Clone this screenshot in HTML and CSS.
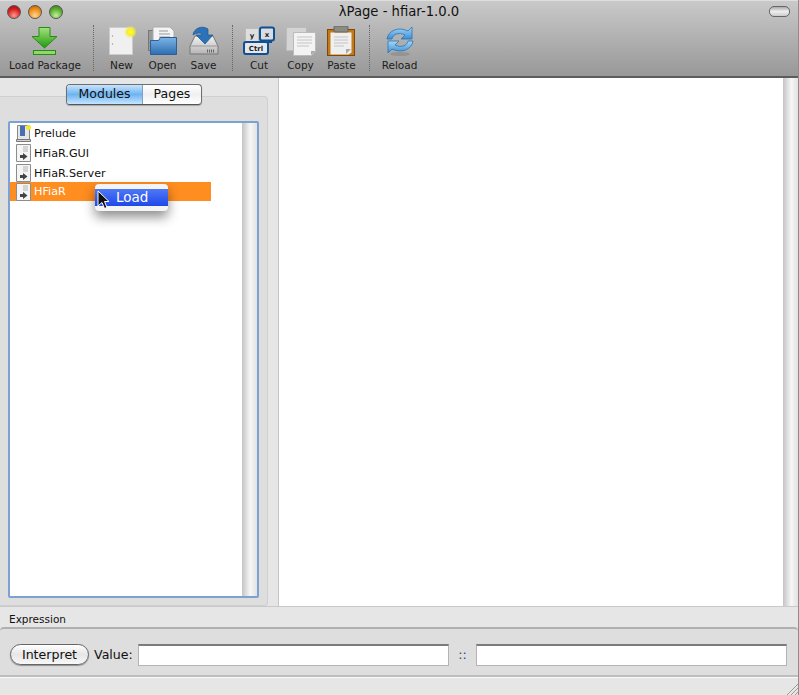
FILE: index.html
```html
<!DOCTYPE html>
<html lang="en">
<head>
  <meta charset="UTF-8" />
  <title>λPage - hfiar-1.0.0</title>
  <link rel="stylesheet" href="styles.css">
</head>
<body>
<div class="window">

  <header class="head">
    <div class="titlebar">
      <div class="lights">
        <span class="light red"></span>
        <span class="light orange"></span>
        <span class="light green"></span>
      </div>
      <div class="title">λPage - hfiar-1.0.0</div>
      <span class="pill"></span>
    </div>
    <div class="toolbar">
      <div class="tool tool-load">
        <svg width="32" height="30" viewBox="0 0 32 30">
          <defs><linearGradient id="g1" x1="0" y1="0" x2="0" y2="1"><stop offset="0" stop-color="#a5e27a"/><stop offset="1" stop-color="#1e9a0e"/></linearGradient></defs>
          <path d="M10 1.500h11v9h7L15.500 22 3 10.500h7z" fill="url(#g1)" stroke="#2b8a1c"/>
          <rect x="4.500" y="24.500" width="22" height="4" fill="#8fd968" stroke="#2b8a1c"/>
        </svg>
        <span>Load Package</span>
      </div>
      <i class="sep"></i>
      <div class="tool tool-new">
        <svg width="32" height="30" viewBox="0 0 32 30">
          <defs><radialGradient id="g2"><stop offset="0" stop-color="#ffff30"/><stop offset=".5" stop-color="#f4ee30"/><stop offset="1" stop-color="#f4ee30" stop-opacity="0"/></radialGradient></defs>
          <rect x="3.500" y="1.500" width="23" height="27" fill="#f0f0f0" stroke="#ccc"/>
          <circle cx="6.500" cy="10" r=".7" fill="#999"/><circle cx="6.500" cy="18" r=".7" fill="#999"/>
          <circle cx="24.500" cy="6" r="6.500" fill="url(#g2)"/>
        </svg>
        <span>New</span>
      </div>
      <div class="tool tool-open">
        <svg width="32" height="30" viewBox="0 0 32 30">
          <rect x="1.500" y="4.500" width="12" height="20" fill="#9a9a9a" stroke="#777"/>
          <path d="M6 1h17l4 4v10H6z" fill="#f4f4f4" stroke="#aaa"/>
          <path d="M12 5h9M12 8h11M12 11h11" stroke="#999"/>
          <defs><linearGradient id="g3" x1="0" y1="0" x2="0" y2="1"><stop offset="0" stop-color="#7db4e6"/><stop offset="1" stop-color="#2c6cb0"/></linearGradient></defs>
          <path d="M3.500 14.500h8l2-3h16v17h-26z" fill="url(#g3)" stroke="#2a5f98"/>
        </svg>
        <span>Open</span>
      </div>
      <div class="tool tool-save">
        <svg width="32" height="30" viewBox="0 0 32 30">
          <defs><linearGradient id="g4" x1="0" y1="0" x2="0" y2="1"><stop offset="0" stop-color="#f2f2f2"/><stop offset="1" stop-color="#b5b5b5"/></linearGradient></defs>
          <path d="M7 10h18l5 10v8H2v-8z" fill="url(#g4)" stroke="#777"/>
          <path d="M3 20h26" stroke="#999"/>
          <path d="M19 25h8" stroke="#666" stroke-width="3" stroke-dasharray="1 1"/>
          <path d="M5 9C6 2 14-1 20 3v6h5l-8 9-9-9h6c-1-3-6-2-9 0z" fill="#2c72b8" stroke="#1d568f" stroke-width=".7"/>
        </svg>
        <span>Save</span>
      </div>
      <i class="sep"></i>
      <div class="tool tool-cut">
        <svg width="32" height="30" viewBox="0 0 32 30">
          <rect x="2.500" y="2.500" width="13" height="13" rx="1" fill="#dedede" stroke="#bbb"/>
          <rect x="17" y="1.500" width="14" height="13" rx="2" fill="#d8dde4" stroke="#0f4f92" stroke-width="2"/>
          <rect x="1" y="16" width="24" height="12" rx="2" fill="#e4e8ee" stroke="#0f4f92" stroke-width="2"/>
          <path d="M25 16h3v-1" stroke="#0f4f92" stroke-width="2" fill="none"/>
          <text x="9" y="12" class="key">y</text>
          <text x="24" y="11" class="key">x</text>
          <text x="13" y="25" class="key">Ctrl</text>
        </svg>
        <span>Cut</span>
      </div>
      <div class="tool tool-copy">
        <svg width="32" height="30" viewBox="0 0 32 30">
          <rect x="1.500" y="1.500" width="20" height="23" fill="#d4d4d4" stroke="#bbb"/>
          <path d="M8.500 6.500h22v19l-4 4h-18z" fill="#f3f3f3" stroke="#bbb"/>
          <path d="M12 11h15M12 14h15M12 17h15M12 20h12" stroke="#c4c4c4"/>
          <path d="M26 29v-4h5z" fill="#aaa"/>
        </svg>
        <span>Copy</span>
      </div>
      <div class="tool tool-paste">
        <svg width="32" height="30" viewBox="0 0 32 30">
          <rect x="1.500" y="3.500" width="27" height="26" fill="#c47a14" stroke="#7e480c"/>
          <path d="M4.500 6.500h21v20l-3 2h-18z" fill="#efefef"/>
          <rect x="8" y="0" width="14" height="6" rx="1" fill="#8b8b80" stroke="#666"/>
          <path d="M8 11h14M8 14h14M8 17h14M8 20h10" stroke="#c4c4c4"/>
          <path d="M20 28l5-5h-5z" fill="#aaa"/>
        </svg>
        <span>Paste</span>
      </div>
      <i class="sep"></i>
      <div class="tool tool-reload">
        <svg width="32" height="30" viewBox="0 0 32 30">
          <defs><linearGradient id="g5" x1="0" y1="0" x2="0" y2="1"><stop offset="0" stop-color="#a4d8f8"/><stop offset="1" stop-color="#3c8ed4"/></linearGradient></defs>
          <ellipse cx="16" cy="28" rx="10" ry="2" fill="#777" opacity=".4"/>
          <path d="M3 13C4 5 14 0 24 5l4-4v12H17l4-4C15 6 9 8 8 13z" fill="url(#g5)" stroke="#2c72b8" stroke-width=".8"/>
          <path d="M29 15c-1 8-11 13-21 8l-4 4V15h11l-4 4c6 3 12 1 13-4z" fill="url(#g5)" stroke="#2c72b8" stroke-width=".8"/>
        </svg>
        <span>Reload</span>
      </div>
    </div>
  </header>

  <main class="main">
    <section class="side">
      <div class="tabs">
        <span class="tab on">Modules</span>
        <span class="tab">Pages</span>
      </div>
      <div class="box">
        <div class="list">
          <div class="rows">
            <div class="row">
              <svg class="file" width="16" height="18" viewBox="0 0 16 18">
                <path d="M1.500 1.500h12v14h-12z" fill="#e6e6e6" stroke="#888"/>
                <rect x="4" y="2" width="5" height="10" fill="#4a6fb0"/>
                <path d="M.5 15.500h14v2H.5z" fill="#d4d4d4" stroke="#777"/>
                <circle cx="12.500" cy="3.500" r="2.500" fill="#f2e92a"/>
              </svg>
              <span>Prelude</span>
            </div>
            <div class="row">
              <svg class="file" width="16" height="18" viewBox="0 0 16 18"><use href="#modfile"/></svg>
              <span>HFiaR.GUI</span>
            </div>
            <div class="row">
              <svg class="file" width="16" height="18" viewBox="0 0 16 18"><use href="#modfile"/></svg>
              <span>HFiaR.Server</span>
            </div>
            <div class="row picked">
              <svg class="file" width="16" height="18" viewBox="0 0 16 18"><use href="#modfile"/></svg>
              <span>HFiaR</span>
            </div>
          </div>
          <div class="scroll"></div>
          <div class="menu">
            <div class="menu-item">Load</div>
            <svg class="cursor" width="13" height="20" viewBox="0 0 13 20">
              <path d="M1 1v15l4-3.500 2.500 6 2.500-1-2.500-6H12z" fill="#111" stroke="#fff"/>
            </svg>
          </div>
        </div>
      </div>
    </section>
    <section class="page">
      <div class="scroll"></div>
    </section>
  </main>

  <div class="expr-label">Expression</div>
  <section class="expr">
    <button class="btn">Interpret</button>
    <label class="value">Value:</label>
    <div class="field"></div>
    <span class="dots">::</span>
    <div class="field"></div>
  </section>
  <footer class="status">
    <svg class="grip" width="12" height="12" viewBox="0 0 12 12">
      <path d="M1 12L12 1M5 12l7-7M9 12l3-3" stroke="#999"/>
    </svg>
  </footer>
</div>

<svg width="0" height="0" class="defs">
  <symbol id="modfile" viewBox="0 0 16 18">
    <path d="M.5 .5h14v17h-14z" fill="#f4f4f4" stroke="#8c8c8c"/>
    <path d="M7 3h5M7 5h5M7 7h5" stroke="#b4b4b4"/>
    <path d="M4 11h3V9l4.500 3.500L7 16v-2H4z" fill="#444"/>
  </symbol>
</svg>
</body>
</html>
```

FILE: styles.css
```css
html, body {
  margin: 0;
  padding: 0;
  overflow: hidden;
}

body {
  width: 799px;
  height: 695px;
  font-family: "DejaVu Sans", Verdana, sans-serif;
  font-size: 10.5px;
  color: #111;
  background: #e6e6e6;
}

.defs {
  position: absolute;
}

.window {
  display: flex;
  flex-direction: column;
  height: 695px;
  border-right: 1px solid #8c8c8c;
  box-sizing: border-box;
}

.head {
  height: 78px;
  box-sizing: border-box;
  background: linear-gradient(#c9c9c9, #989898);
  border-top: 1px solid #dedede;
  border-bottom: 2px solid #5c5c5c;
  flex: none;
}

.titlebar {
  display: flex;
  align-items: center;
  height: 21px;
}

.lights {
  display: flex;
  gap: 7px;
  margin-left: 7px;
}

.light {
  width: 14px;
  height: 14px;
  border-radius: 50%;
  border: 1px solid #555;
  box-sizing: border-box;
}

.red { background: radial-gradient(circle at 50% 80%, #ff9a90, #d81a1a 60%, #8e1010); }
.orange { background: radial-gradient(circle at 50% 80%, #ffd890, #ee8a14 60%, #a85d10); }
.green { background: radial-gradient(circle at 50% 80%, #c4f098, #58ad2c 60%, #33741c); }

.title {
  flex: 1;
  text-align: center;
  font-size: 13.200px;
  padding-right: 34px;
}

.pill {
  width: 19px;
  height: 9px;
  margin-right: 8px;
  border: 1px solid #666;
  border-radius: 5px;
  background: linear-gradient(#aaa, #eee 50%, #ccc);
}

.toolbar {
  display: flex;
  height: 50px;
  align-items: stretch;
}

.tool {
  display: flex;
  flex-direction: column;
  align-items: center;
  justify-content: flex-end;
  width: 41px;
  color: #1c1c1c;
}

.tool span {
  white-space: nowrap;
  margin-top: 1px;
  line-height: 13px;
}

.tool svg {
  flex: none;
  margin-bottom: 2px;
}

.tool-load {
  width: 74px;
  margin-left: 8px;
  margin-right: 11px;
}

.tool-cut {
  width: 40px;
}

.sep {
  width: 0;
  margin: 3px 0 1px;
  border-left: 1px dotted #666;
}

.tool-new { margin-left: 7px; }
.tool-cut { margin-left: 6px; }
.tool-copy { margin-left: 1px; }
.tool-reload { margin-left: 9px; }
.tool-paste { margin-right: 7px; }
.tool-save { margin-right: 8px; }

.key {
  font-size: 7px;
  font-weight: bold;
  text-anchor: middle;
  fill: #222;
}

.main {
  flex: none;
  display: flex;
  height: 529px;
  border-bottom: 1px solid #c9c9c9;
  box-sizing: border-box;
}

.side {
  width: 278px;
  flex: none;
  position: relative;
  padding-top: 6px;
  box-sizing: border-box;
}

.tabs {
  display: flex;
  width: 136px;
  height: 21px;
  margin-left: 66px;
  box-sizing: border-box;
  border: 1px solid #6f6f6f;
  border-bottom-color: #555;
  border-radius: 4px;
  background: linear-gradient(#fff, #f0f0f0 50%, #fff);
  position: relative;
  z-index: 1;
  overflow: hidden;
  font-size: 12.500px;
  line-height: 18px;
  box-shadow: 0 1px 1px rgba(0, 0, 0, .25);
}

.tab {
  flex: 1;
  text-align: center;
}

.tab.on {
  flex: none;
  width: 75px;
  background: linear-gradient(#c8e3fb, #6fb4f2 50%, #c4e6ff);
  border-right: 1px solid #7f9fc4;
}

.box {
  margin-top: -9px;
  width: 268px;
  height: 510px;
  box-sizing: border-box;
  background: #dedede;
  border: 1px solid #cfcfcf;
  border-left: none;
  border-radius: 0 4px 4px 0;
  padding: 24px 8px 7px 8px;
}

.list {
  position: relative;
  display: flex;
  height: 100%;
  background: #fff;
  border: 2px solid #7aa2d4;
  border-radius: 2px;
  box-sizing: border-box;
}

.rows {
  flex: 1;
}

.row {
  display: flex;
  align-items: center;
  gap: 1px;
  width: 201px;
  height: 20px;
  padding-left: 6px;
  box-sizing: border-box;
  font-size: 11.200px;
}

.file {
  flex: none;
  margin-right: 1px;
}

.picked {
  background: #ff8d20;
  color: #fff;
  height: 19px;
  margin-top: -1px;
}

.scroll {
  width: 15px;
  flex: none;
  background: linear-gradient(to right, #c4c4c4, #f6f6f6 55%, #e2e2e2);
}

.menu {
  position: absolute;
  left: 85px;
  top: 61px;
  width: 73px;
  height: 27px;
  padding-top: 5px;
  box-sizing: border-box;
  background: #f4f4f4;
  border-radius: 4px;
  box-shadow: 0 6px 12px rgba(0, 0, 0, .45);
}

.menu-item {
  height: 17px;
  line-height: 17px;
  padding-left: 21px;
  background: linear-gradient(#4f78f6, #1f48ea);
  color: #fff;
  font-size: 13.500px;
}

.cursor {
  position: absolute;
  left: 2px;
  top: 6px;
}

.page {
  flex: 1;
  display: flex;
  justify-content: flex-end;
  background: #fff;
  border-left: 1px solid #c4c4c4;
}

.expr-label {
  height: 20px;
  padding: 5px 0 0 9px;
  box-sizing: border-box;
  line-height: 14px;
  flex: none;
}

.expr {
  height: 50px;
  flex: none;
  display: flex;
  align-items: center;
  box-sizing: border-box;
  padding: 5px 11px 0 10px;
  background: #dedede;
  border-top: 2px solid #b0b0b0;
  border-bottom: 2px solid #bdbdbd;
  border-radius: 4px 4px 0 0;
  font-size: 12.600px;
}

.btn {
  width: 79px;
  height: 21px;
  padding: 0;
  border: 1px solid #666;
  border-radius: 11px;
  background: linear-gradient(#fff, #e6e6e6 50%, #f8f8f8);
  box-shadow: 0 1px 1px rgba(0, 0, 0, .35);
  font: inherit;
  color: #111;
}

.value {
  margin: 0 5px;
  width: 39px;
  flex: none;
  white-space: nowrap;
}

.field {
  height: 22px;
  box-sizing: border-box;
  width: 311px;
  flex: none;
  background: #fff;
  border: 1px solid #b4b4b4;
  border-top: 2px solid #7c7c7c;
}

.dots {
  width: 27px;
  text-align: center;
  color: #234a80;
}

.status {
  flex: 1;
  position: relative;
  border-top: 1px solid #fafafa;
}

.grip {
  position: absolute;
  right: 0;
  bottom: 0;
}
```
